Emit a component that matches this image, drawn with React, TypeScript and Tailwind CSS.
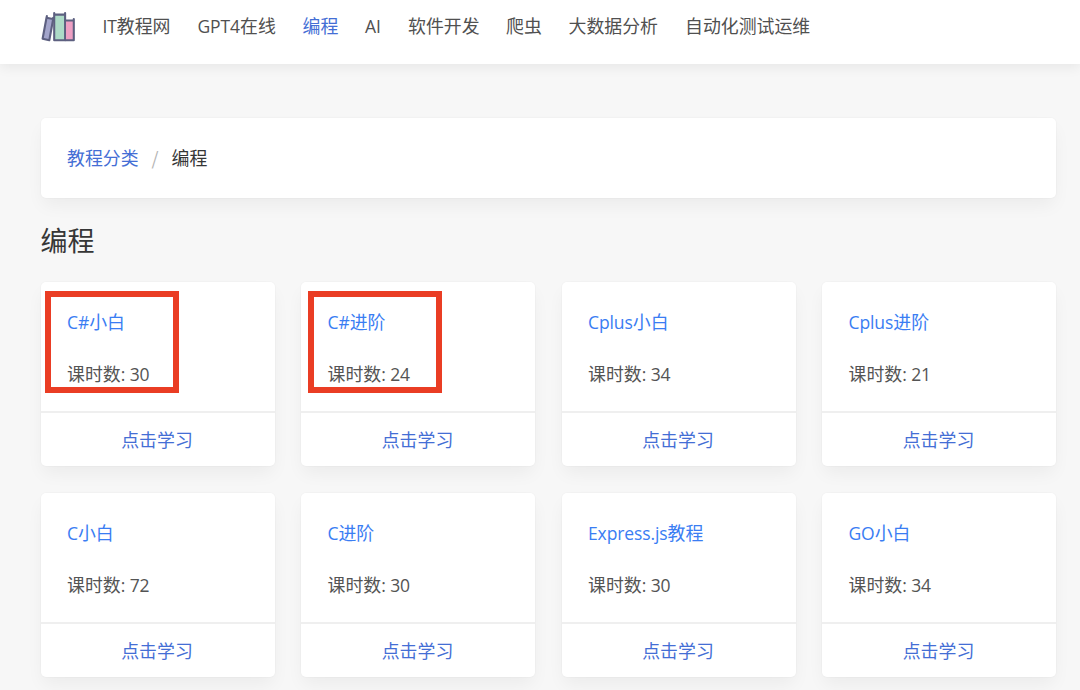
import clsx from 'clsx'

type NavItem = { latin?: string; label?: string; width: string; active?: boolean }

type Course = {
  latin: string
  name: string
  lessons: number
  // position of the red highlight frame, if the card has one
  mark?: string
}

const navItems: NavItem[] = [
  { latin: 'IT', label: '教程网', width: 'w-[95px]' },
  { latin: 'GPT4', label: '在线', width: 'w-[105px]' },
  { label: '编程', width: 'w-[62.5px]', active: true },
  { latin: 'AI', width: 'w-[43px]' },
  { label: '软件开发', width: 'w-[98px]' },
  { label: '爬虫', width: 'w-[62.5px]' },
  { label: '大数据分析', width: 'w-[116.5px]' },
  { label: '自动化测试运维', width: 'w-[126px]' },
]

const courses: Course[] = [
  { latin: 'C#', name: '小白', lessons: 30, mark: 'left-[4px]' },
  { latin: 'C#', name: '进阶', lessons: 24, mark: 'left-[6.5px]' },
  { latin: 'Cplus', name: '小白', lessons: 34 },
  { latin: 'Cplus', name: '进阶', lessons: 21 },
  { latin: 'C', name: '小白', lessons: 72 },
  { latin: 'C', name: '进阶', lessons: 30 },
  { latin: 'Express.js', name: '教程', lessons: 30 },
  { latin: 'GO', name: '小白', lessons: 34 },
]

function Latin({ children }: { children: React.ReactNode }) {
  return (
    <span className="font-['Open_Sans',sans-serif] text-[17.5px] tracking-[-0.1px]">
      {children}
    </span>
  )
}

function Logo() {
  return (
    <svg
      className="w-[36px] h-[34px] shrink-0"
      viewBox="0 0 36 34"
      fill="none"
      stroke="#5d6080"
      strokeWidth="2.1"
      strokeLinecap="round"
      strokeLinejoin="round"
    >
      <path d="M6.6 7.6 L13 8.8 L9.2 30.4 L3 29 Z" fill="#a3a5cb" stroke="none" />
      <path d="M6.9 6 L6.5 7.8 L2.6 28.8 L9.3 30.3 L13.2 9 M6.5 7.8 L13 9 L13.3 7.8" />
      <path d="M14.2 4.5 H25 V30.2 H14.2 Z" fill="#addbc7" stroke="none" />
      <path d="M14.2 3 V30.3 H25.1 V3 M14.2 4.6 H25.1" />
      <path d="M26 10.5 H33.6 V30.2 H26 Z" fill="#ee9fc3" stroke="none" />
      <path d="M25.4 30.3 H33.8 V9 M25.4 10.5 H33.8" />
    </svg>
  )
}

function CourseCard({ course }: { course: Course }) {
  return (
    <div className="relative h-[184px] rounded-[5px] bg-white shadow-[0_9px_18px_-2px_rgba(10,10,10,0.05),0_0_0_1px_rgba(10,10,10,0.015)]">
      <div className="h-[129px] px-[26.5px] pt-[26px]">
        <h2 className="h-[27px] leading-[27px] text-[#3a7df3]">
          <Latin>{course.latin}</Latin>
          {course.name}
        </h2>
        <p className="mt-[25px] h-[27px] leading-[27px] text-[#545454]">
          课时数<Latin>: {course.lessons}</Latin>
        </p>
      </div>
      <a
        href="#"
        className="flex h-[55px] items-center justify-center border-t-2 border-[#efefef] pr-[1px] pb-[1px] text-[#446ed5]"
      >
        点击学习
      </a>
      {course.mark && (
        <div
          className={clsx(
            'absolute top-[9px] h-[102px] w-[134px] border-[6px] border-[#ea3d24]',
            course.mark
          )}
        />
      )}
    </div>
  )
}

export default function App() {
  return (
    <div className="h-[690px] overflow-hidden bg-[#f7f7f7] font-['Noto_Sans_CJK_SC',sans-serif] text-[17.9px] text-[#505050]">
      <header className="flex h-[64px] bg-white pl-[40px] pt-[10px] shadow-[0_3px_12px_rgba(10,10,10,0.07)]">
        <Logo />
        <nav className="ml-[26.5px] flex whitespace-nowrap leading-[31px]">
          {navItems.map((item) => (
            <a
              key={item.label ?? item.latin}
              href="#"
              className={clsx(item.width, item.active && 'text-[#446ed5]')}
            >
              {item.latin && <Latin>{item.latin}</Latin>}
              {item.label}
            </a>
          ))}
        </nav>
      </header>

      <main className="pl-[40.5px] pr-[24px] pt-[54px]">
        <div className="flex h-[80px] items-center rounded-[5px] bg-white pb-[1px] pl-[26.5px] shadow-[0_9px_18px_-2px_rgba(10,10,10,0.05),0_0_0_1px_rgba(10,10,10,0.015)]">
          <a href="#" className="text-[#446ed5]">
            教程分类
          </a>
          <span className="w-[33px] text-center text-[#b5b5b5]">/</span>
          <span className="text-[#363636]">编程</span>
        </div>

        <h1 className="mt-[22px] h-[62px] text-[27px] leading-[40px] text-[#363636]">编程</h1>

        <div className="grid grid-cols-4 gap-x-[26.5px] gap-y-[27px]">
          {courses.map((course) => (
            <CourseCard key={course.latin + course.name} course={course} />
          ))}
        </div>
      </main>
    </div>
  )
}
